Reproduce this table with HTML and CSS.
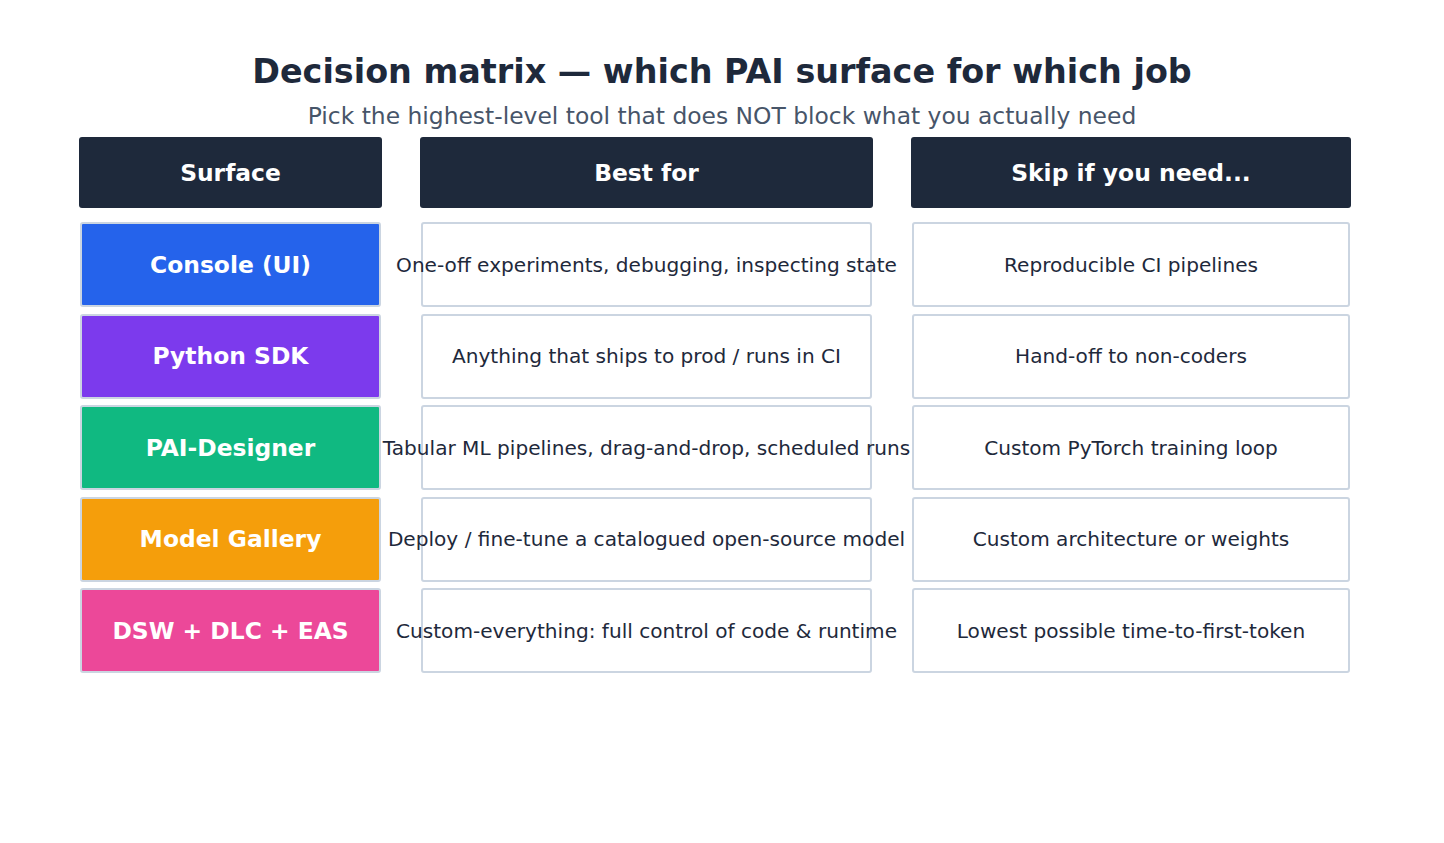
FILE: index.html
```html
<!DOCTYPE html>
<html>
<head>
<meta charset="utf-8">
<link rel="stylesheet" href="styles.css">
</head>
<body>
<div class="page">
  <h1 class="title">Decision matrix — which PAI surface for which job</h1>
  <p class="subtitle">Pick the highest-level tool that does NOT block what you actually need</p>
  <div class="matrix">
    <div class="head">Surface</div>
    <div class="head">Best for</div>
    <div class="head">Skip if you need...</div>

    <div class="cell surface blue">Console (UI)</div>
    <div class="cell">One-off experiments, debugging, inspecting state</div>
    <div class="cell">Reproducible CI pipelines</div>

    <div class="cell surface purple">Python SDK</div>
    <div class="cell">Anything that ships to prod / runs in CI</div>
    <div class="cell">Hand-off to non-coders</div>

    <div class="cell surface green">PAI-Designer</div>
    <div class="cell">Tabular ML pipelines, drag-and-drop, scheduled runs</div>
    <div class="cell">Custom PyTorch training loop</div>

    <div class="cell surface amber">Model Gallery</div>
    <div class="cell">Deploy / fine-tune a catalogued open-source model</div>
    <div class="cell">Custom architecture or weights</div>

    <div class="cell surface pink">DSW + DLC + EAS</div>
    <div class="cell">Custom-everything: full control of code &amp; runtime</div>
    <div class="cell">Lowest possible time-to-first-token</div>
  </div>
</div>
</body>
</html>
```
FILE: styles.css
```css
html, body {
  margin: 0;
  padding: 0;
  background: #ffffff;
}
body {
  font-family: "DejaVu Sans", sans-serif;
  width: 1444px;
  height: 843px;
  overflow: hidden;
}
.page {
  padding-top: 52px;
}
.title {
  margin: 0;
  text-align: center;
  font-size: 33.4px;
  line-height: 40px;
  font-weight: bold;
  color: #1e293b;
}
.subtitle {
  margin: 10px 0 0 0;
  text-align: center;
  font-size: 23.4px;
  line-height: 28px;
  color: #475569;
}
.matrix {
  margin-top: 7px;
  margin-left: 79px;
  display: grid;
  grid-template-columns: 303px 453px 440px;
  grid-template-rows: 78.5px repeat(5, 85px);
  column-gap: 38px;
  row-gap: 6.5px;
}
.head {
  height: 71px;
  align-self: start;
  background: #1e293b;
  border-radius: 3px;
  color: #ffffff;
  font-weight: bold;
  font-size: 23.4px;
  display: flex;
  align-items: center;
  justify-content: center;
  white-space: nowrap;
}
.cell {
  margin: 0 1px;
  box-sizing: border-box;
  height: 85px;
  border: 2px solid #cbd5e1;
  border-radius: 3px;
  background: #ffffff;
  color: #1e293b;
  font-size: 20.1px;
  display: flex;
  align-items: center;
  justify-content: center;
  white-space: nowrap;
}
.surface {
  color: #ffffff;
  font-weight: bold;
  font-size: 23.4px;
}
.blue { background: #2563eb; }
.purple { background: #7c3aed; }
.green { background: #10b981; }
.amber { background: #f59e0b; }
.pink { background: #ec4899; }
```
